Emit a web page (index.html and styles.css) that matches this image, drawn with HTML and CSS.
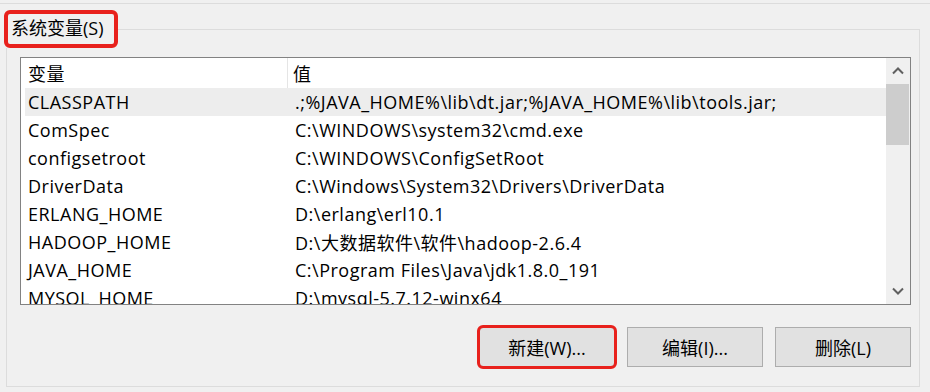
FILE: index.html
```html
<!DOCTYPE html>
<html lang="zh-CN">
<head>
<meta charset="UTF-8" />
<title>系统变量</title>
<link rel="stylesheet" href="styles.css">
</head>
<body>

<div class="prev-group"></div>

<fieldset class="grupo">
  <legend class="marcado">系统变量(S)</legend>

  <div class="lista">
    <div class="tabla">
      <div class="cabecera">
        <div class="col-nombre">变量</div>
        <div class="col-valor">值</div>
      </div>
      <div class="fila activa"><div class="col-nombre">CLASSPATH</div><div class="col-valor">.;%JAVA_HOME%\lib\dt.jar;%JAVA_HOME%\lib\tools.jar;</div></div>
      <div class="fila"><div class="col-nombre">ComSpec</div><div class="col-valor">C:\WINDOWS\system32\cmd.exe</div></div>
      <div class="fila"><div class="col-nombre">configsetroot</div><div class="col-valor">C:\WINDOWS\ConfigSetRoot</div></div>
      <div class="fila"><div class="col-nombre">DriverData</div><div class="col-valor">C:\Windows\System32\Drivers\DriverData</div></div>
      <div class="fila"><div class="col-nombre">ERLANG_HOME</div><div class="col-valor">D:\erlang\erl10.1</div></div>
      <div class="fila"><div class="col-nombre">HADOOP_HOME</div><div class="col-valor">D:\大数据软件\软件\hadoop-2.6.4</div></div>
      <div class="fila"><div class="col-nombre">JAVA_HOME</div><div class="col-valor">C:\Program Files\Java\jdk1.8.0_191</div></div>
      <div class="fila"><div class="col-nombre">MYSQL_HOME</div><div class="col-valor">D:\mysql-5.7.12-winx64</div></div>
    </div>

    <!-- barra de desplazamiento -->
    <div class="scroll">
      <div class="flecha">
        <svg width="12" height="8" viewBox="0 0 12 8"><path d="M1 6.5 L6 1.5 L11 6.5" fill="none" stroke="#606060" stroke-width="2"/></svg>
      </div>
      <div class="thumb"></div>
      <div class="pista"></div>
      <div class="flecha">
        <svg width="12" height="8" viewBox="0 0 12 8"><path d="M1 1.5 L6 6.5 L11 1.5" fill="none" stroke="#606060" stroke-width="2"/></svg>
      </div>
    </div>
  </div>

  <div class="botones">
    <button class="boton marcado-boton">新建(W)...</button>
    <button class="boton">编辑(I)...</button>
    <button class="boton">删除(L)</button>
  </div>
</fieldset>

</body>
</html>
```

FILE: styles.css
```css
body {
  margin: 0;
  background: #f0f0f0;
  font-family: 'Open Sans', 'Noto Sans CJK SC', sans-serif;
  font-size: 18px;
  letter-spacing: 0.5px;
  color: #000;
}
.prev-group {
  height: 3px;
  border-bottom: 1px solid #dcdcdc;
}
.grupo {
  margin: 6px 10px 0 6px;
  padding: 0 8px 19px 13px;
  border: 1px solid #dcdcdc;
  min-width: 0;
}
/* etiqueta del grupo con el marco rojo */
.marcado {
  margin-left: -16px;
  padding: 3px 10px 4px 3px;
  border: 4px solid #e8211c;
  border-radius: 6px;
  line-height: 23px;
  letter-spacing: 0;
}
.lista {
  display: flex;
  height: 246px;
  margin-top: 9px;
  border: 1px solid #828282;
  background: #fff;
  overflow: hidden;
}
.tabla {
  flex: 1;
  min-width: 0;
}
.cabecera {
  display: flex;
  height: 30px;
  align-items: stretch;
}
.cabecera .col-nombre,
.cabecera .col-valor {
  display: flex;
  align-items: center;
}
.cabecera .col-nombre {
  border-right: 1px solid #e5e5e5;
}
.fila {
  display: flex;
  height: 28px;
  align-items: center;
  margin-left: 4px;
  white-space: nowrap;
}
.fila.activa {
  background: #ededed;
}
.col-nombre {
  width: 259px;
  padding-left: 7px;
}
.fila .col-nombre {
  width: 262px;
  padding-left: 3px;
}
.col-valor {
  padding-left: 5px;
}
.scroll {
  width: 24px;
  background: #f0f0f0;
  display: flex;
  flex-direction: column;
}
.flecha {
  height: 26px;
  display: flex;
  align-items: center;
  justify-content: center;
}
.thumb {
  height: 61px;
  margin: 0 1px 0 0;
  background: #cdcdcd;
}
.pista {
  flex: 1;
}
.botones {
  display: flex;
  justify-content: flex-end;
  gap: 12px;
  margin-top: 22px;
}
.boton {
  width: 136px;
  height: 40px;
  background: #e1e1e1;
  border: 1px solid #adadad;
  font-family: inherit;
  font-size: 18px;
  letter-spacing: 0;
  color: #000;
  padding: 0;
}
.marcado-boton {
  outline: 3px solid #e8211c;
  outline-offset: -1px;
  border-radius: 4px;
}
```
